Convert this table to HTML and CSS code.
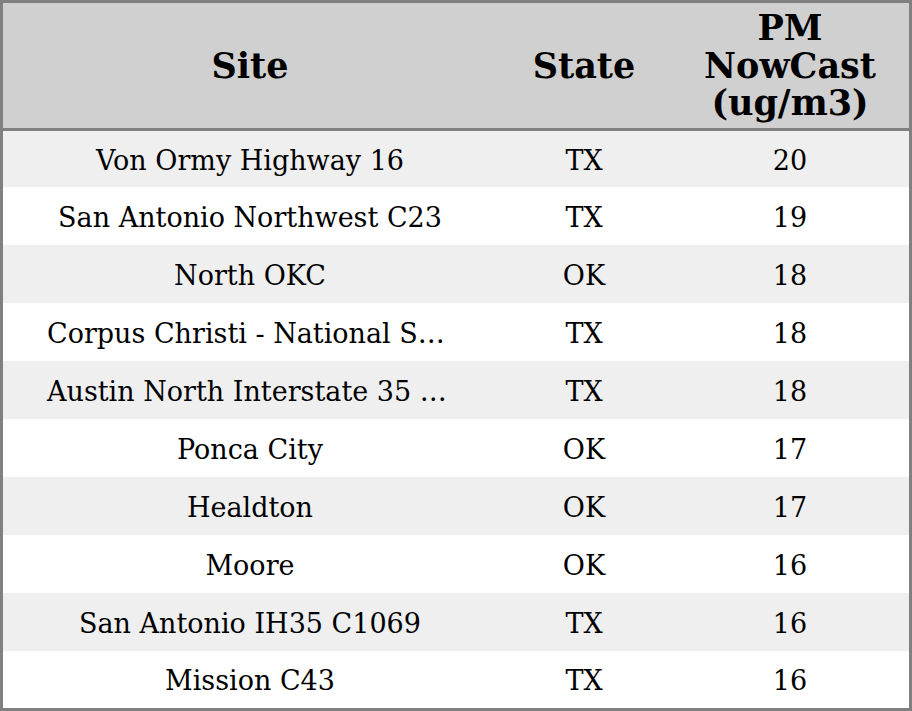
FILE: index.html
```html
<!DOCTYPE html>
<html>
<head>
<meta charset="utf-8">
<link rel="stylesheet" href="styles.css">
</head>
<body>
<table class="grid">
  <colgroup>
    <col class="c-site">
    <col class="c-state">
    <col class="c-pm">
  </colgroup>
  <thead>
    <tr><th>Site</th><th>State</th><th>PM<br>NowCast<br>(ug/m3)</th></tr>
  </thead>
  <tbody>
    <tr><td class="site">Von Ormy Highway 16</td><td>TX</td><td>20</td></tr>
    <tr><td class="site">San Antonio Northwest C23</td><td>TX</td><td>19</td></tr>
    <tr><td class="site">North OKC</td><td>OK</td><td>18</td></tr>
    <tr><td class="site">Corpus Christi - National Seashore</td><td>TX</td><td>18</td></tr>
    <tr><td class="site">Austin North Interstate 35 C1068</td><td>TX</td><td>18</td></tr>
    <tr><td class="site">Ponca City</td><td>OK</td><td>17</td></tr>
    <tr><td class="site">Healdton</td><td>OK</td><td>17</td></tr>
    <tr><td class="site">Moore</td><td>OK</td><td>16</td></tr>
    <tr><td class="site">San Antonio IH35 C1069</td><td>TX</td><td>16</td></tr>
    <tr><td class="site">Mission C43</td><td>TX</td><td>16</td></tr>
  </tbody>
</table>
</body>
</html>
```
FILE: styles.css
```css
html, body {
  margin: 0;
  padding: 0;
  background: #ffffff;
}
.grid {
  width: 912px;
  border: 3px solid #808080;
  border-collapse: separate;
  border-spacing: 0;
  table-layout: fixed;
  font-family: "DejaVu Serif", serif;
  color: #000;
}
.c-site { width: 494px; }
.c-state { width: 174px; }
.c-pm { width: 238px; }
.grid th {
  background: #d0d0d0;
  border-bottom: 3px solid #808080;
  height: 125px;
  padding: 0 8px;
  font-size: 35px;
  font-weight: bold;
  line-height: 37.5px;
  text-align: center;
  vertical-align: middle;
}
.grid td {
  height: 56px;
  padding: 2px 8px 0;
  font-size: 27px;
  text-align: center;
  vertical-align: middle;
  white-space: nowrap;
  overflow: hidden;
  text-overflow: ellipsis;
}
.grid td.site {
  padding-left: 44px;
  padding-right: 44px;
}
.grid tbody tr:nth-child(odd) td {
  background: #efefef;
}
.grid tbody tr:first-child td {
  height: 54px;
}
.grid tbody tr:last-child td {
  height: 55px;
}
```
